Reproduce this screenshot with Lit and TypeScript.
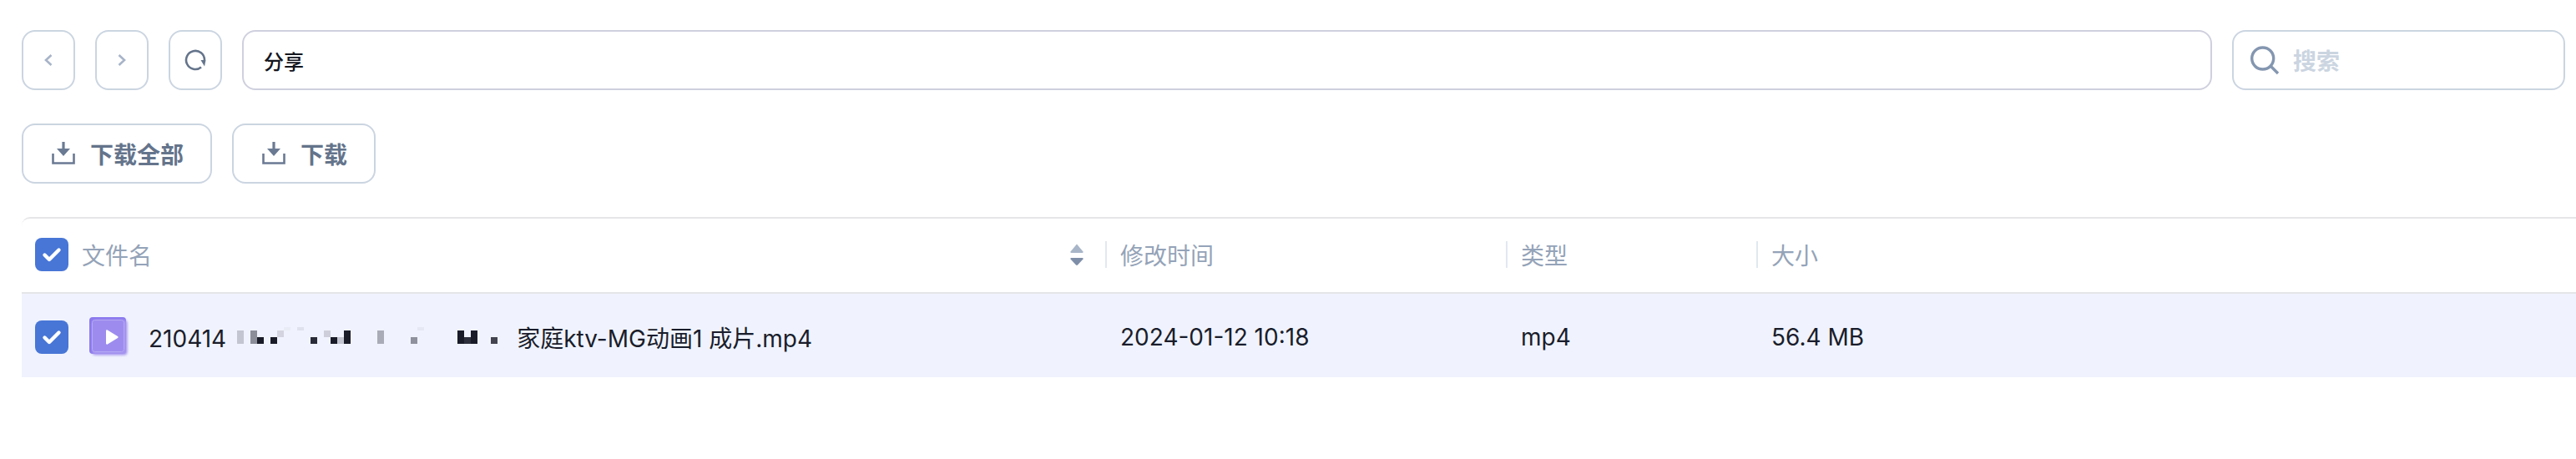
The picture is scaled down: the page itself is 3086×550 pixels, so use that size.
import { LitElement, html, css, svg } from "lit";
import { customElement } from "lit/decorators.js";

const check = html`<svg viewBox="0 0 40 40" width="40" height="40"><path d="M11.5 20.5 17 26 28.5 14.5" fill="none" stroke="#fff" stroke-width="4.4" stroke-linecap="round" stroke-linejoin="round"/></svg>`;
const dl = html`<svg viewBox="0 0 28 28" width="28" height="28"><path d="M1.5 14V25.5H26.5V14" fill="none" stroke="#6b7a93" stroke-width="2.6"/><path d="M12.4 0H15.6V8H22L14 17 6 8H12.4Z" fill="#6b7a93"/></svg>`;
const D = "#1a1b29";
const blocks: [number, number, number, number, string][] = [
  [284,396,8,16,"#c3c5d0"],[300,396,8,16,"#8b8d99"],[308,404,8,8,D],[324,404,8,8,D],[332,396,8,8,"#d3d4df"],
  [340,392,8,4,"#e9ebf5"],[356,392,8,4,"#dfe1ec"],[372,404,8,8,"#2a2b38"],[388,396,8,8,"#cdced9"],[396,404,8,8,D],
  [404,404,8,8,"#c3c5d0"],[412,396,8,16,D],[452,396,8,16,"#a9abb7"],[492,404,8,8,"#8f919d"],[500,392,8,4,"#e6e8f3"],
  [548,396,8,16,D],[556,404,8,8,"#2e2f3c"],[564,396,8,16,D],[588,404,8,8,"#42434f"],
];

@customElement("app-root")
export class AppRoot extends LitElement {
  static styles = css`
    :host { display: block; position: relative; width: 3086px; height: 550px; background: #fff; font-family: Inter, "Noto Sans CJK SC", sans-serif; box-sizing: border-box; padding: 36px 13px 0 26px; overflow: hidden; }
    .row { display: flex; align-items: stretch; height: 72px; }
    .nav { width: 64px; border: 2px solid #cbd5e1; border-radius: 16px; box-sizing: border-box; display: flex; align-items: center; justify-content: center; margin-right: 24px; }
    .addr { flex: 1; border: 2px solid #cfd0de; border-radius: 16px; box-sizing: border-box; display: flex; align-items: center; padding-left: 24px; font-size: 24px; font-weight: 500; color: #14161f; margin-right: 24px; }
    .search { width: 399px; border: 2px solid #cbd5e1; border-radius: 16px; box-sizing: border-box; display: flex; align-items: center; padding-left: 20px; gap: 15px; font-size: 28px; font-weight: 700; color: #cbd5e1; }
    .row2 { margin-top: 40px; gap: 24px; }
    .btn { border: 2px solid #cbd5e1; border-radius: 16px; box-sizing: border-box; display: flex; align-items: center; padding-left: 34px; gap: 18px; font-size: 28px; font-weight: 700; color: #64748b; }
    .btn.all { width: 228px; }
    .btn.one { width: 172px; }
    .table { margin-top: 40px; margin-right: -13px; }
    .tr { display: grid; grid-template-columns: 1298px 480px 300px 1fr; align-items: center; box-sizing: border-box; }
    .thead { height: 92px; padding-bottom: 2px; border-top: 2px solid #e6e6e8; border-bottom: 2px solid #e4e5e8; border-top-left-radius: 10px; font-size: 28px; color: #94a3b8; }
    .tbody { height: 100px; padding-top: 3px; background: #f0f3fd; font-size: 28px; color: #1a1d2b; }
    .c { display: flex; align-items: center; height: 32px; }
    .c.sep { border-left: 2px solid #e2e8f0; padding-left: 16px; }
    .c.plain { padding-left: 18px; }
    .first { display: flex; align-items: center; padding-left: 16px; }
    .cb { width: 40px; height: 40px; background: #4876d6; border-radius: 8px; flex: none; }
    .cb svg { display: block; }
    .hname { margin-left: 16px; flex: 1; }
    .sort { margin-right: 26px; display: block; }
    .file { width: 48px; height: 48px; margin-left: 25px; flex: none; display: block; }
    .fname { margin-left: 23px; white-space: pre; }
    .gap { display: inline-block; width: 348px; height: 1px; }
    .mosaic { position: absolute; left: 0; top: 0; pointer-events: none; }
  `;

  render() {
    return html`
      <div class="row">
        <div class="nav"><svg viewBox="0 0 12 16" width="12" height="16"><path d="M9.5 2 3 8l6.5 6" fill="none" stroke="#a7b4c8" stroke-width="2.6"/></svg></div>
        <div class="nav"><svg viewBox="0 0 12 16" width="12" height="16"><path d="M2.5 2 9 8l-6.5 6" fill="none" stroke="#a7b4c8" stroke-width="2.6"/></svg></div>
        <div class="nav"><svg viewBox="0 0 26 26" width="26" height="26"><path d="M20 21.4A11 11 0 1 1 24 13" fill="none" stroke="#64748b" stroke-width="2.6"/><path d="M19.5 13H25.5L24 20.5Z" fill="#64748b"/></svg></div>
        <div class="addr">分享</div>
        <div class="search"><svg viewBox="0 0 36 36" width="36" height="36"><circle cx="14.7" cy="16" r="13" fill="none" stroke="#8496b0" stroke-width="3.4"/><path d="M24 25 33 34" stroke="#8496b0" stroke-width="3.4"/></svg><span>搜索</span></div>
      </div>
      <div class="row row2">
        <div class="btn all">${dl}<span>下载全部</span></div>
        <div class="btn one">${dl}<span>下载</span></div>
      </div>
      <div class="table">
        <div class="tr thead">
          <div class="first">
            <div class="cb">${check}</div><span class="hname">文件名</span>
            <svg class="sort" viewBox="0 0 16 26" width="16" height="26"><path d="M8 .5 15.5 9.5Q16 11 14.5 11H1.5Q0 11 .5 9.5Z" fill="#a8b5c8"/><path d="M1.5 17H14.5Q16 17 15.5 18.5L9 25.5Q8 26.3 7 25.5L.5 18.5Q0 17 1.5 17Z" fill="#7f8ea8"/></svg>
          </div>
          <div class="c sep">修改时间</div>
          <div class="c sep">类型</div>
          <div class="c sep">大小</div>
        </div>
        <div class="tr tbody">
          <div class="first">
            <div class="cb">${check}</div>
            <svg class="file" viewBox="0 0 48 48" width="48" height="48">
              <defs><filter id="b" x="-10%" y="-10%" width="120%" height="120%"><feGaussianBlur stdDeviation="1.5"/></filter></defs>
              <rect x="0" y="0" width="44" height="44" rx="4" fill="#8a78ee"/>
              <rect x="3.5" y="3.5" width="42" height="42" rx="4" fill="#a594ef" filter="url(#b)"/>
              <rect x="3.5" y="3.5" width="38" height="38" rx="3" fill="#9d8cee" stroke="#b5a8f3" stroke-width="1"/>
              <path d="M20 16.5C20 15.5 21 15 21.8 15.5L34 23c.8.5.8 1.5 0 2L21.8 32.5C21 33 20 32.5 20 31.5Z" fill="#fff"/>
            </svg>
            <span class="fname">210414<span class="gap"></span>家庭ktv-MG动画1 成片.mp4</span>
          </div>
          <div class="c plain">2024-01-12 10:18</div>
          <div class="c plain">mp4</div>
          <div class="c plain">56.4 MB</div>
        </div>
      </div>
      <svg class="mosaic" width="3086" height="550">${blocks.map(([x, y, w, h, c]) => svg`<rect x=${x} y=${y} width=${w} height=${h} fill=${c}/>`)}</svg>
    `;
  }
}
